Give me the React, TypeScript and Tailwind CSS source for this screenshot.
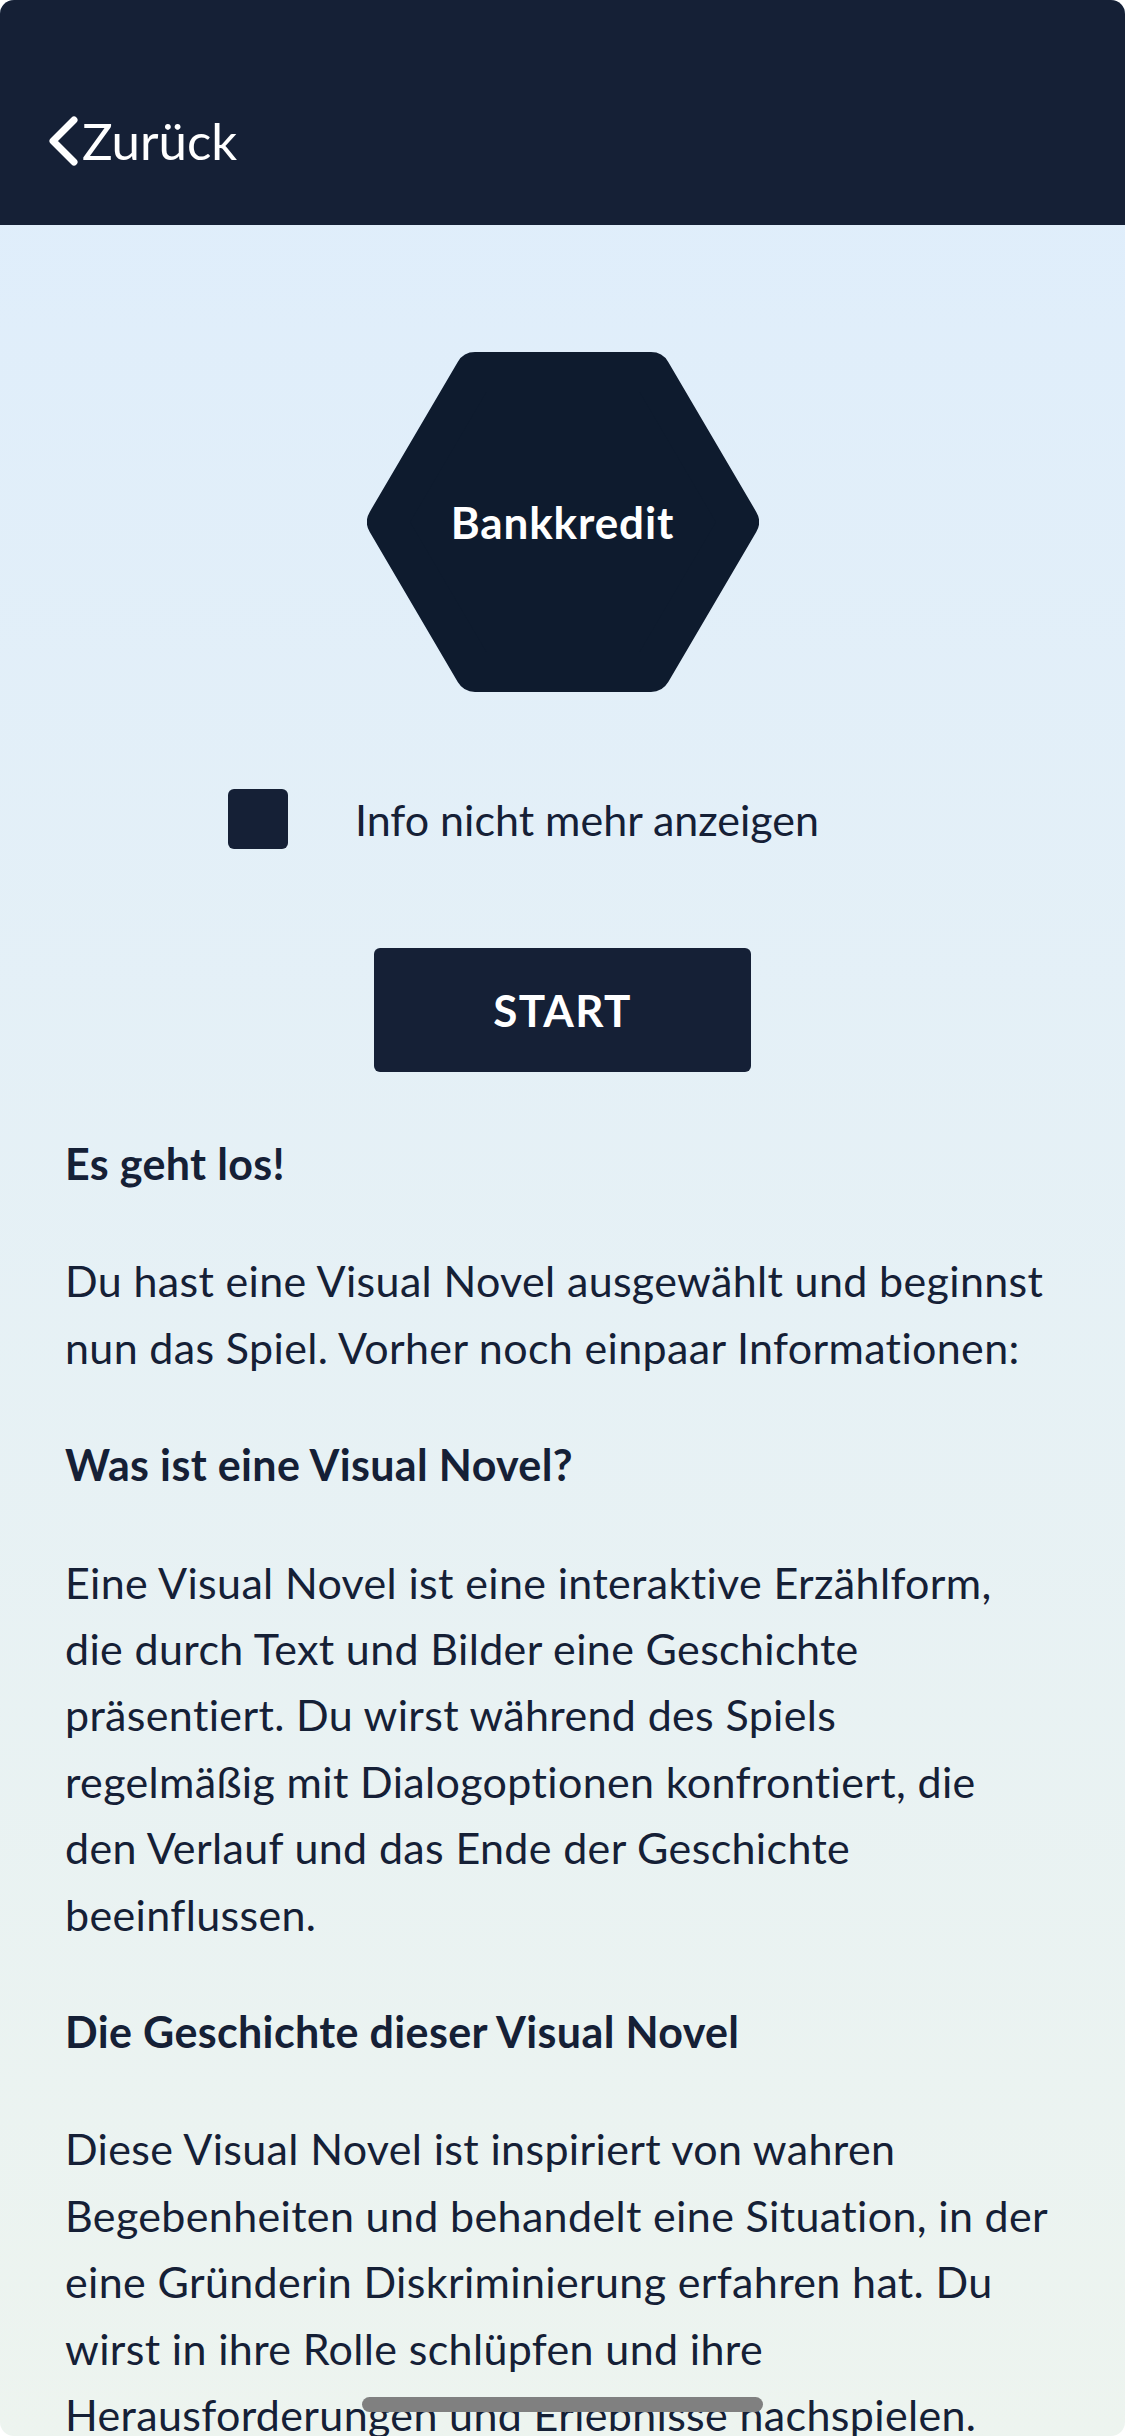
import React from "react";

const sections = [
  {
    title: "Es geht los!",
    body: "Du hast eine Visual Novel ausgewählt und beginnst nun das Spiel. Vorher noch einpaar Informationen:",
  },
  {
    title: "Was ist eine Visual Novel?",
    body: "Eine Visual Novel ist eine interaktive Erzählform, die durch Text und Bilder eine Geschichte präsentiert. Du wirst während des Spiels regelmäßig mit Dialogoptionen konfrontiert, die den Verlauf und das Ende der Geschichte beeinflussen.",
  },
  {
    title: "Die Geschichte dieser Visual Novel",
    body: "Diese Visual Novel ist inspiriert von wahren Begebenheiten und behandelt eine Situation, in der eine Gründerin Diskriminierung erfahren hat. Du wirst in ihre Rolle schlüpfen und ihre Herausforderungen und Erlebnisse nachspielen.",
  },
];

const Hexagon = ({ label }: { label: string }) => (
  <div className="relative w-[392px] h-[340px] flex items-center justify-center">
    <svg className="absolute inset-0" width="392" height="340" viewBox="0 0 392 340">
      <polygon
        points="20,170 108,20 284,20 372,170 284,320 108,320"
        fill="#0e1b2e"
        stroke="#0e1b2e"
        strokeWidth="40"
        strokeLinejoin="round"
      />
    </svg>
    <span className="relative text-[44px] leading-none font-bold tracking-[0.02em] text-white">{label}</span>
  </div>
);

export default function App() {
  return (
    <div className="relative w-[1125px] h-[2436px] overflow-hidden rounded-[14px] bg-gradient-to-b from-[#deedfc] to-[#edf4ef] font-['Lato',sans-serif] text-[#152036] [font-variant-ligatures:no-common-ligatures]">
      <header className="h-[225px] bg-[#152036] flex items-start pt-[115px] pl-[46px]">
        <button className="flex items-center gap-[2px] text-white">
          <svg width="34" height="50" viewBox="0 0 34 50" fill="none">
            <path d="M28 4 L7 25 L28 46" stroke="white" strokeWidth="7" strokeLinecap="round" strokeLinejoin="round" />
          </svg>
          <span className="text-[51px] leading-none">Zurück</span>
        </button>
      </header>

      <div className="flex justify-center mt-[127px]">
        <Hexagon label="Bankkredit" />
      </div>

      <label className="flex items-center gap-[67px] pl-[228px] mt-[97px]">
        <span className="w-[60px] h-[60px] rounded-[6px] bg-[#152036]" />
        <span className="text-[43px] leading-none">Info nicht mehr anzeigen</span>
      </label>

      <div className="flex justify-center mt-[99px]">
        <button className="w-[377px] h-[124px] rounded-[6px] bg-[#152036] text-white text-[44px] font-bold tracking-[0.03em]">
          START
        </button>
      </div>

      <div className="pl-[65px] pr-[70px] mt-[59px] flex flex-col gap-[51px] text-[43px] tracking-[0.35px] leading-[66.4px]">
        {sections.map((s) => (
          <React.Fragment key={s.title}>
            <h2 className="font-bold">{s.title}</h2>
            <p>{s.body}</p>
          </React.Fragment>
        ))}
      </div>

      <div className="absolute bottom-[24px] inset-x-0 mx-auto w-[401px] h-[15px] rounded-full bg-[#808080]" />
    </div>
  );
}
